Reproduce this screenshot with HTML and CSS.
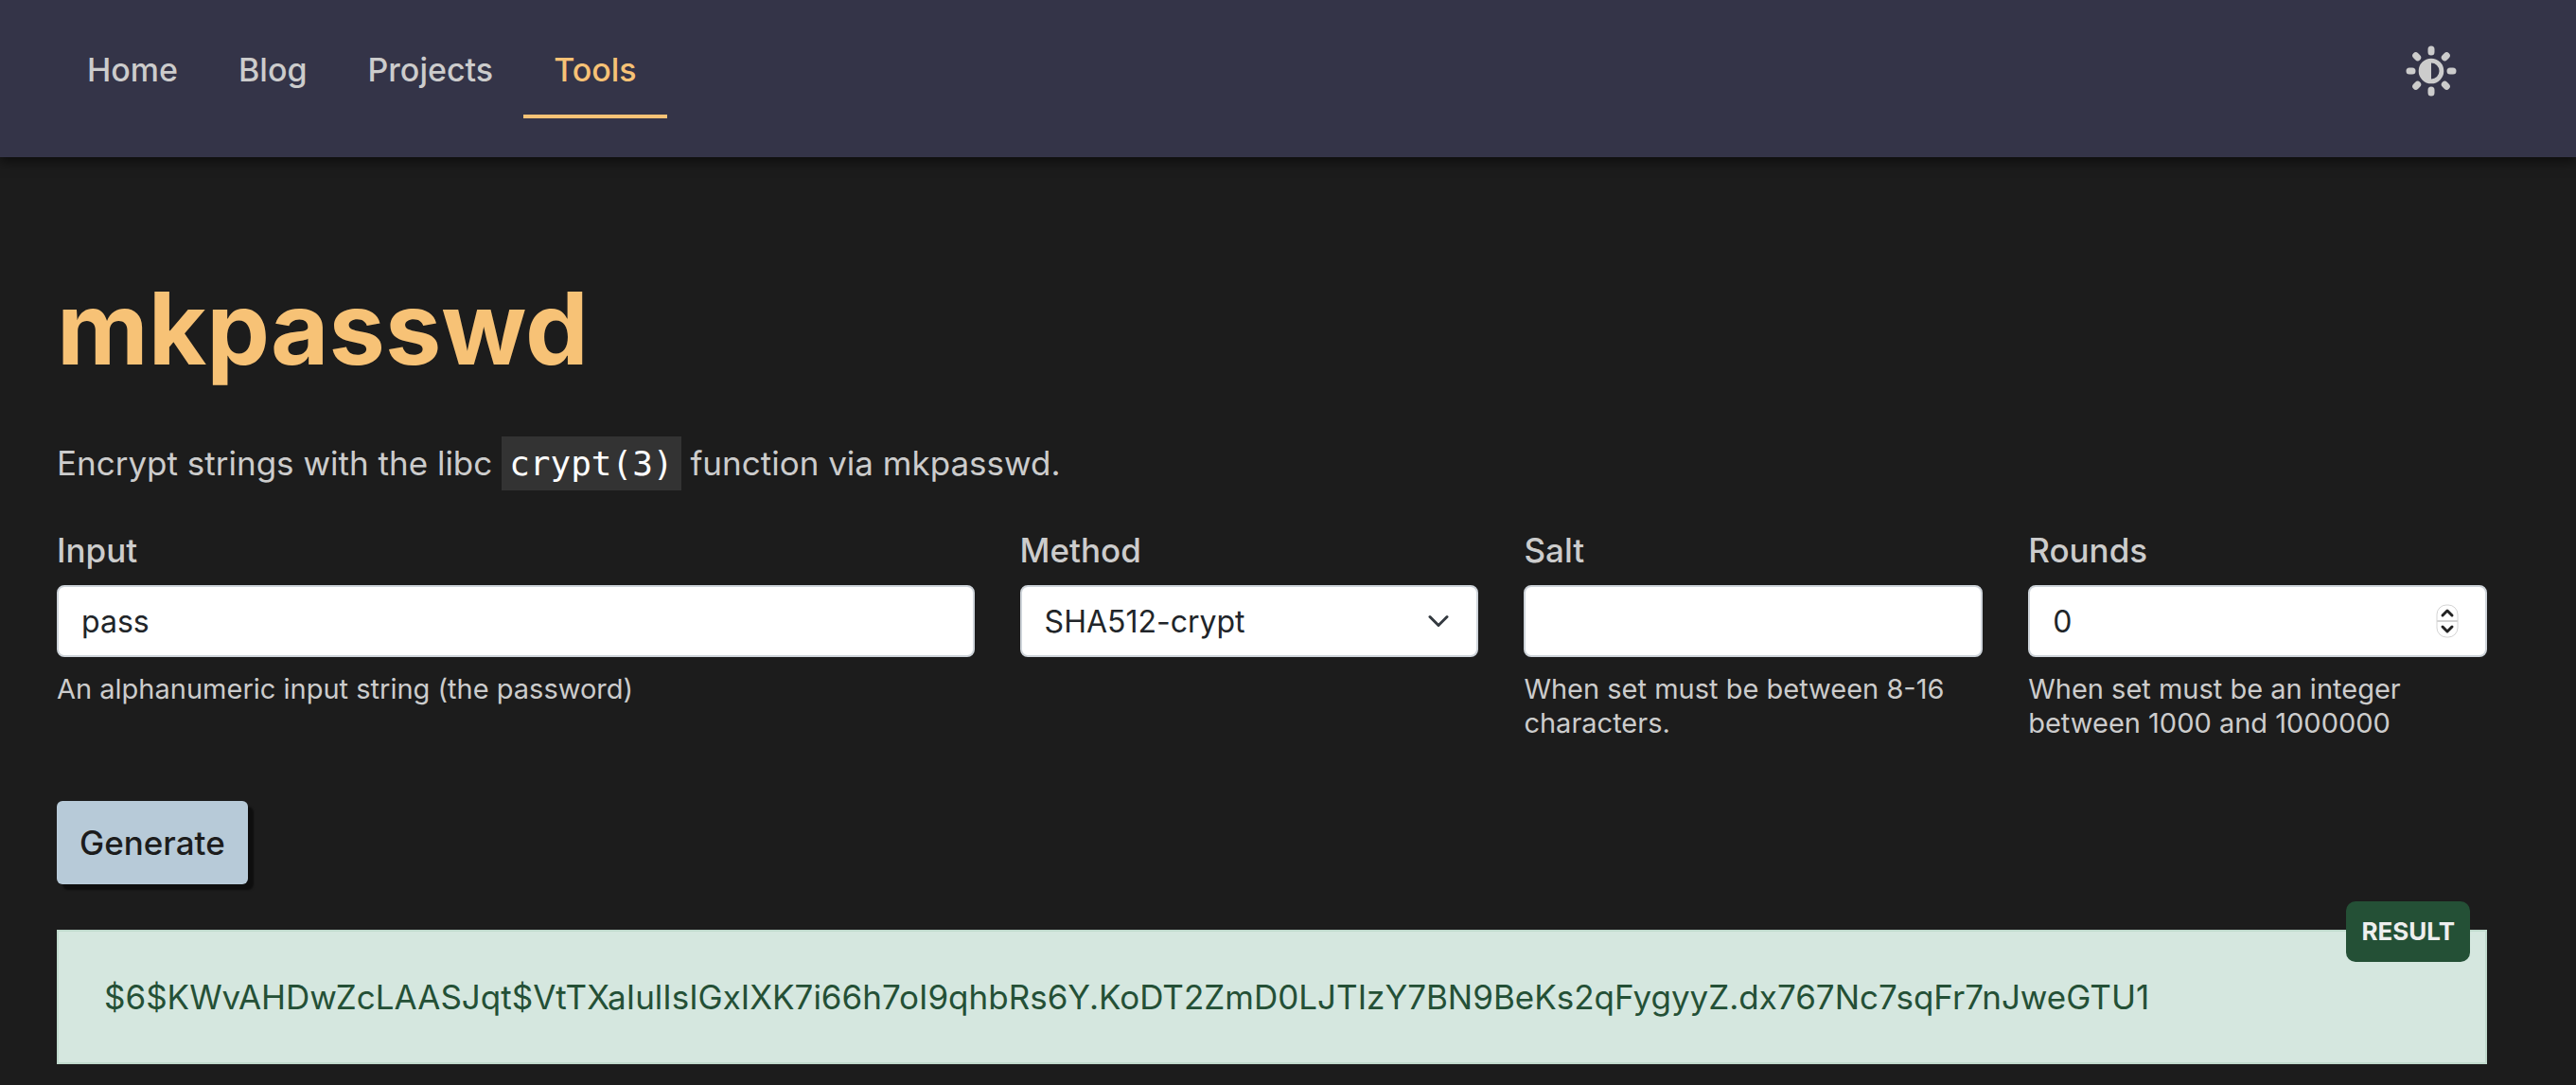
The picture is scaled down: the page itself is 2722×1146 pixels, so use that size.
FILE: index.html
```html
<!DOCTYPE html>
<html lang="en">
<head>
  <meta charset="utf-8">
  <meta name="viewport" content="width=device-width, initial-scale=1">
  <title>mkpasswd</title>
  <link rel="stylesheet" href="styles.css">
</head>
<body>
  <header class="site-header">
    <nav class="nav" aria-label="Main">
      <a class="nav-link" href="#home">Home</a>
      <a class="nav-link" href="#blog">Blog</a>
      <a class="nav-link" href="#projects">Projects</a>
      <a class="nav-link active" href="#tools" aria-current="page">Tools</a>
    </nav>
    <button class="theme-toggle" type="button" aria-label="Toggle theme">
      <svg width="54" height="54" viewBox="-27 -27 54 54" fill="currentColor" aria-hidden="true">
        <path fill-rule="evenodd" d="M0-13.3a13.3 13.3 0 1 1 0 26.6a13.3 13.3 0 1 1 0-26.6zM0-8.5v17a8.5 8.5 0 0 0 0-17z"/>
        <g stroke="currentColor" stroke-width="7" stroke-linecap="round">
          <path d="M0-23v3M0 20v3M-23 0h3M20 0h3M-16.3-16.3l2 2M14.3 14.3l2 2M-16.3 16.3l2-2M14.3-14.3l2-2"/>
        </g>
      </svg>
    </button>
  </header>

  <main class="page">
    <h1 class="title">mkpasswd</h1>
    <p class="lead">Encrypt strings with the libc <code class="code">crypt(3)</code> function via mkpasswd.</p>

    <form class="form">
      <div class="fields">
        <div class="field">
          <label class="label" for="input">Input</label>
          <input class="control" id="input" type="text" value="pass" aria-describedby="input-help">
          <div class="help" id="input-help">An alphanumeric input string (the password)</div>
        </div>
        <div class="field">
          <label class="label" for="method">Method</label>
          <div class="control-wrap">
            <select class="control" id="method">
              <option>SHA512-crypt</option>
            </select>
            <svg class="chevron" width="24" height="24" viewBox="0 0 16 16" fill="none" stroke="#343a40" stroke-width="2" stroke-linecap="round" stroke-linejoin="round" aria-hidden="true"><path d="m2 5 6 6 6-6"/></svg>
          </div>
        </div>
        <div class="field">
          <label class="label" for="salt">Salt</label>
          <input class="control" id="salt" type="text" aria-describedby="salt-help">
          <div class="help" id="salt-help">When set must be between 8-16 characters.</div>
        </div>
        <div class="field">
          <label class="label" for="rounds">Rounds</label>
          <div class="control-wrap">
            <input class="control" id="rounds" type="number" value="0" aria-describedby="rounds-help">
            <svg class="stepper" width="24" height="36" viewBox="0 0 24 36" fill="none" aria-hidden="true">
              <rect x="1" y="1" width="22" height="34" rx="10" fill="#fff" stroke="#d4d4d4"/>
              <path d="M1 18h22" stroke="#d4d4d4" stroke-width="2"/>
              <path d="m7 12 5-5 5 5M7 24l5 5 5-5" stroke="#222" stroke-width="3" stroke-linecap="round" stroke-linejoin="round"/>
            </svg>
          </div>
          <div class="help" id="rounds-help">When set must be an integer between 1000 and 1000000</div>
        </div>
      </div>
      <button class="submit" type="submit">Generate</button>
    </form>

    <section class="result">
      <span class="badge">RESULT</span>
      <output class="hash" for="input method salt rounds">$6$KWvAHDwZcLAASJqt$VtTXaIulIsIGxIXK7i66h7oI9qhbRs6Y.KoDT2ZmD0LJTIzY7BN9BeKs2qFygyyZ.dx767Nc7sqFr7nJweGTU1</output>
    </section>
  </main>
</body>
</html>
```
FILE: styles.css
```css
*, *::before, *::after {
  box-sizing: border-box;
}

body {
  margin: 0;
  background: #1c1c1c;
  color: #cccccc;
  font-family: Inter, "Liberation Sans", sans-serif;
  font-size: 35px;
  line-height: 54px;
}

button, input, select {
  font-family: inherit;
}

.site-header {
  display: flex;
  justify-content: space-between;
  align-items: flex-start;
  padding: 27px 126px 41px 60px;
  background: #343448;
  box-shadow: 0 4px 12px rgba(0, 0, 0, 0.6);
}

.nav {
  display: flex;
}

.nav-link {
  padding: 20px 32px;
  border-bottom: 4px solid transparent;
  color: #cccccc;
  font-size: 34px;
  font-weight: 500;
  text-decoration: none;
}

.nav-link.active {
  border-bottom-color: #f7c276;
  color: #f7c276;
}

.theme-toggle {
  display: flex;
  margin-top: 21px;
  padding: 0;
  border: 0;
  background: none;
  color: #cccccc;
}

.page {
  padding: 114px 94px 20px 60px;
}

.title {
  margin: 0 0 48px;
  color: #f7c276;
  font-size: 106px;
  font-weight: 700;
  line-height: 134px;
}

.lead {
  margin: 0 0 38px;
}

.code {
  padding: 8px;
  background: #333333;
  color: #ffffff;
  font-family: "DejaVu Sans Mono", monospace;
  font-size: 36px;
  line-height: 1;
}

.fields {
  display: grid;
  grid-template-columns: 2fr 1fr 1fr 1fr;
  gap: 48px;
}

.field {
  min-width: 0;
}

.label {
  display: block;
  margin-bottom: 10px;
  font-weight: 500;
}

.control {
  display: block;
  width: 100%;
  height: 76px;
  padding: 0 24px;
  border: 2px solid #ced4da;
  border-radius: 8px;
  background: #ffffff;
  color: #212529;
  font-size: 32px;
  appearance: none;
}

.control[type="number"]::-webkit-inner-spin-button {
  appearance: none;
}

.control-wrap {
  display: grid;
  align-items: center;
}

.control-wrap > * {
  grid-area: 1 / 1;
}

.chevron,
.stepper {
  justify-self: end;
  margin-right: 30px;
  pointer-events: none;
}

.help {
  margin-top: 16px;
  font-size: 29px;
  line-height: 36px;
}

.submit {
  display: block;
  height: 88px;
  margin-top: 64px;
  padding: 0 24px;
  border: 0;
  border-radius: 6px;
  background: #b7cad8;
  box-shadow: 6px 6px 2px rgba(0, 0, 0, 0.5);
  color: #1c1c1c;
  font-size: 35px;
  font-weight: 500;
}

.result {
  position: relative;
  margin-top: 48px;
  padding: 42px 48px;
  border: 2px solid #c0dacd;
  background: #d5e7df;
  color: #245036;
}

.hash {
  display: block;
  overflow-wrap: anywhere;
}

.badge {
  position: absolute;
  top: -32px;
  right: 16px;
  padding: 14px 16px;
  border-radius: 10px;
  background: #245036;
  color: #eeeeee;
  font-size: 26px;
  font-weight: 700;
  line-height: 36px;
}
```
